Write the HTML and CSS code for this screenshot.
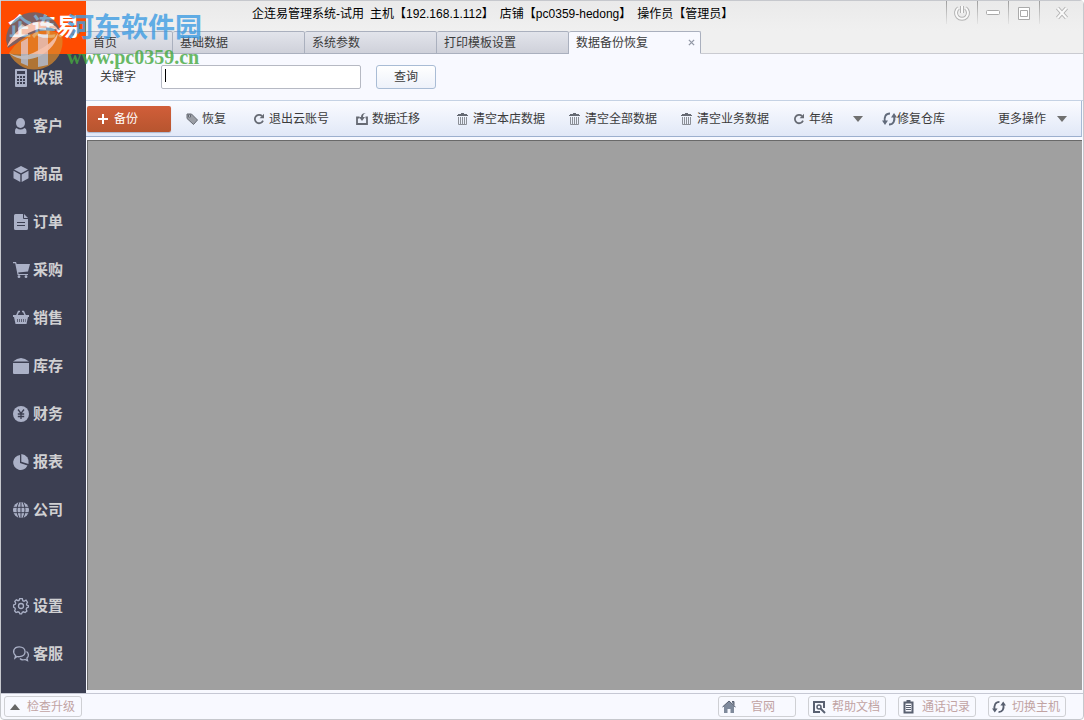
FILE: index.html
```html
<!DOCTYPE html>
<html lang="zh-CN">
<head>
<meta charset="utf-8">
<title>企连易管理系统</title>
<link rel="stylesheet" href="styles.css">
</head>
<body>
<svg class="defs" aria-hidden="true">
  <symbol id="redo" viewBox="0 0 12 12"><path d="M9 3A4.200 4.200 0 1 0 10 7.600" fill="none" stroke="currentColor" stroke-width="1.800"/><path d="M11 .8v4.400H6.600z" fill="currentColor"/></symbol>
  <symbol id="trash" viewBox="0 0 11 13"><path d="M4 1h3v1h3v1h1v1H0V3h1V2h3z" fill="currentColor"/><path d="M1.500 5v7.500h8V5M3.500 5v7M5.500 5v7M7.500 5v7" fill="none" stroke="#8b8f96"/></symbol>
  <symbol id="sync" viewBox="0 0 15 14"><path d="M8 1.500C3.500 1.500 2 5 2.800 10M7 12.500c4.500 0 6-3.500 5.200-8.500" fill="none" stroke="currentColor" stroke-width="2"/><path d="M0 8.500h6L3 13zM15 5.500H9L12 1z" fill="currentColor"/></symbol>
  <symbol id="down" viewBox="0 0 10 6"><path d="M0 0h10L5 6z" fill="currentColor"/></symbol>
</svg>
<div class="window">
  <aside class="sidebar">
    <div class="logo">企连易</div>
    <nav class="menu">
      <a href="#"><svg viewBox="0 0 16 18"><path fill-rule="evenodd" d="M3 0h10q1 0 1 1v16q0 1-1 1H3q-1 0-1-1V1q0-1 1-1zm1 2v3h8V2zM4 7v2h2V7zm3 0v2h2V7zm3 0v2h2V7zM4 10v2h2v-2zm3 0v2h2v-2zm3 0v2h2v-2zm-6 3v2h2v-2zm3 0v2h2v-2zm3 0v2h2v-2z"/></svg>收银</a>
      <a href="#"><svg viewBox="0 0 16 16"><ellipse cx="7.500" cy="5" rx="4.500" ry="5"/><path d="M3.500 10q4 3 8 0 2 .5 2 3v1.500q0 1.500-1.500 1.500H3.500Q2 16 2 14.500V13q0-2.500 1.500-3z"/></svg>客户</a>
      <a href="#"><svg viewBox="0 0 16 16"><path d="M8 0l7 3.500-7 3.800-7-3.800zM.5 4.700l6.800 3.700V16L.5 12.300zM15.500 4.700L8.700 8.400V16l6.800-3.700z"/></svg>商品</a>
      <a href="#"><svg viewBox="0 0 16 16"><path fill-rule="evenodd" d="M2.500 0H10v4q0 1 1 1h4v9.500q0 1.500-1.500 1.500h-11Q1 16 1 14.500v-13Q1 0 2.500 0zM4 8v1h8V8zm0 3v1h8v-1z"/><path d="M11 0l4 4h-4z"/></svg>订单</a>
      <a href="#"><svg viewBox="0 0 16 16"><path d="M0 0h3l.7 2H17l-2 7.500-9.800 1 .4 1.500H15v1H4.600L2.200 1.200H0z"/><circle cx="6" cy="14.700" r="1.400"/><circle cx="13" cy="14.700" r="1.400"/></svg>采购</a>
      <a href="#"><svg viewBox="0 0 16 16"><path d="M3.500 6L5.500 1.500H7M12.500 6l-2-4.500H9" fill="none" stroke="currentColor" stroke-width="1.500"/><path fill-rule="evenodd" d="M0 5h16v2h-1L13.500 14h-11L1 7H0zm4 4v3h.7V9zm2 0v3h.7V9zm2 0v3h.7V9zm2 0v3h.7V9zm2 0v3h.5V9z"/></svg>销售</a>
      <a href="#"><svg viewBox="0 0 16 16"><path d="M0 3.500Q8-3.500 16 3.500zM0 5h16v10q0 1-1 1H1q-1 0-1-1z"/></svg>库存</a>
      <a href="#"><svg viewBox="0 0 16 16"><circle cx="8" cy="8" r="8"/><path d="M5 3.500l3 4 3-4M8 7.500V13M4.800 8h6.400M4.800 10.500h6.400" fill="none" stroke="#3c3f52" stroke-width="1.300"/></svg>财务</a>
      <a href="#"><svg viewBox="0 0 16 16"><path d="M7 1v8l7.500 2.500A7.500 7.500 0 1 1 7 1z"/><path d="M8.300 0A8 8 0 0 1 15.500 10L8.300 7.800z"/></svg>报表</a>
      <a href="#"><svg viewBox="0 0 16 16"><circle cx="8" cy="8" r="8"/><path d="M0 5.300h16M0 10.700h16M8 0v16M6 0q-4 8 0 16M10 0q4 8 0 16" fill="none" stroke="#3c3f52"/></svg>公司</a>
      <a href="#" class="apart"><svg viewBox="0 0 16 16" class="line"><path d="M6.700.7h2.600l.5 2 1.200.6 2-1.100 1.500 2-1 1.800.4 1.200 1.500.5v1.500l-1.700.8-.5 1.300.7 1.800-1.700 1.500-1.800-.8-1.100.5-.7 1.500H6.900l-.7-1.500-1.300-.5-1.800.7-1.500-1.700.8-1.700L1.900 10 .6 9.200V7l1.700-.7.4-1.200-.9-1.800 1.500-1.500 1.800.9 1.100-.5z"/><circle cx="8" cy="8" r="2.500"/></svg>设置</a>
      <a href="#"><svg viewBox="0 0 16 16" class="line"><path d="M2 12l.6-2.300C-1.200 6 .8.800 6.200.8c7.500 0 8 9.400.3 9.900q-1.500.2-2.500-.2zM13.500 5.500c2.500 1.800 2.500 5 .4 6.600l.6 2.600-2.500-1.200c-2 .7-4 .3-5-1"/></svg>客服</a>
    </nav>
  </aside>
  <main class="content">
    <header class="titlebar">
      <h1 class="caption"><span>企连易管理系统-试用</span><span>主机【192.168.1.112】</span><span>店铺【pc0359-hedong】</span><span>操作员【管理员】</span></h1>
      <div class="controls">
        <button aria-label="电源"><svg viewBox="0 0 18 18"><path d="M5.500 4a6 6 0 1 0 7 0M9 2v7" class="edge"/><path d="M5.500 4a6 6 0 1 0 7 0M9 2v7" class="core"/></svg></button>
        <button aria-label="最小化"><svg viewBox="0 0 18 18"><rect x="2.500" y="6.500" width="13" height="4" rx="1" fill="#fff" stroke="#aaa"/></svg></button>
        <button aria-label="最大化"><svg viewBox="0 0 18 18"><path d="M3.500 3.500h11v12h-11zM5.500 6.500h7v6h-7z" fill="#fff" stroke="#aaa"/></svg></button>
        <button aria-label="关闭"><svg viewBox="0 0 18 18"><path d="M4.500 4l9 10M13.500 4l-9 10" class="edge"/><path d="M4.500 4l9 10M13.500 4l-9 10" class="core"/></svg></button>
      </div>
    </header>
    <nav class="tabs">
      <button class="tab home">首页</button>
      <button class="tab">基础数据</button>
      <button class="tab">系统参数</button>
      <button class="tab">打印模板设置</button>
      <button class="tab active">数据备份恢复<svg viewBox="0 0 8 8"><path d="M1 1l6 6M7 1L1 7" fill="none" stroke="currentColor" stroke-width="1.500"/></svg></button>
    </nav>
    <form class="search">
      <label for="keyword">关键字</label>
      <div class="field"><input id="keyword" type="text"><i class="caret"></i></div>
      <button type="button">查询</button>
    </form>
    <div class="toolbar">
      <button class="primary"><svg viewBox="0 0 10 10"><path d="M5 0v10M0 5h10" stroke="currentColor" stroke-width="2"/></svg>备份</button>
      <button class="restore"><svg viewBox="0 0 12 12"><path fill-rule="evenodd" d="M1 1h4.500l6 6-4 4.500L1 5.500zm1.500 1v2h2V2z" fill="#9b9ea5" stroke="currentColor"/></svg>恢复</button>
      <button class="logout"><svg viewBox="0 0 12 12"><use href="#redo"/></svg>退出云账号</button>
      <button class="migrate"><svg viewBox="0 0 12 12"><path d="M3.500 4.500H1V11h10V4.500H9.500" fill="none" stroke="currentColor" stroke-width="1.800"/><path d="M10 0Q7 .5 7 4h2L6 8 3 4h2Q5 0 10 0z" fill="currentColor"/></svg>数据迁移</button>
      <button class="wipe first"><svg viewBox="0 0 11 13"><use href="#trash"/></svg>清空本店数据</button>
      <button class="wipe"><svg viewBox="0 0 11 13"><use href="#trash"/></svg>清空全部数据</button>
      <button class="wipe"><svg viewBox="0 0 11 13"><use href="#trash"/></svg>清空业务数据</button>
      <button class="year"><svg viewBox="0 0 12 12"><use href="#redo"/></svg>年结</button>
      <button class="drop" aria-label="年结选项"><svg viewBox="0 0 10 6"><use href="#down"/></svg></button>
      <button class="repair"><svg viewBox="0 0 15 14"><use href="#sync"/></svg>修复仓库</button>
      <button class="more">更多操作<svg viewBox="0 0 10 6"><use href="#down"/></svg></button>
    </div>
    <section class="canvas"></section>
  </main>
  <footer class="status">
    <button class="upgrade"><svg viewBox="0 0 10 6"><path d="M0 6h10L5 0z" fill="currentColor"/></svg><span>检查升级</span></button>
    <button><svg viewBox="0 0 14 14"><path d="M7 1l6.500 6H12v6H8.500V9h-3v4H2V7H.5zM10 1.500h2V5l-2-2z" fill="#7f8a9c"/><path d="M.5 7L7 1l6.500 6M10 1.500h2V5" fill="none" stroke="currentColor"/></svg><span>官网</span></button>
    <button><svg viewBox="0 0 14 14"><path d="M12 8V2H2v10h6" fill="none" stroke="currentColor" stroke-width="2"/><circle cx="7" cy="7" r="2" fill="none" stroke="currentColor" stroke-width="1.500"/><path d="M8.500 8.500l4.500 4.500" stroke="currentColor" stroke-width="2"/></svg><span>帮助文档</span></button>
    <button><svg viewBox="0 0 14 14"><path d="M2.500 2.500h8v10h-8z" fill="none" stroke="currentColor" stroke-width="2"/><path d="M4.500 0h4v3h-4z" fill="currentColor"/><path d="M4 5.500h5M4 7.500h5M4 9.500h5" stroke="currentColor"/></svg><span>通话记录</span></button>
    <button><svg viewBox="0 0 15 14"><use href="#sync"/></svg><span>切换主机</span></button>
  </footer>
  <div class="watermark">
    <svg viewBox="0 0 58 58">
      <path d="M1 30A28 28 0 0 1 55 20L29 24 3 38z" fill="#2f6c9e" opacity=".85"/>
      <path d="M57 26A28 28 0 0 1 4 43Q14 28 29 23 45 17 57 26z" fill="#dc8a2c"/>
      <path d="M16 32l7-4v28l-7-3zM33 24h10v31l-10 2z" fill="#dcdcdf"/>
      <path d="M13 27v-9l4-4 6 4v7zM32 19v-6h9v7z" fill="#cfe0ee" opacity=".8"/>
      <path d="M2 37Q8 20 27 13 46 7 54 21 43 14 28 21 12 27 2 37z" fill="#f2f0f0"/>
      <path d="M4 43Q16 50 32 41 48 33 53 23 51 37 35 46 17 54 4 43z" fill="#f2f0f0" opacity=".9"/>
    </svg>
    <div class="words"><strong>河东软件园</strong><b>www.pc0359.cn</b></div>
  </div>
</div>
</body>
</html>
```

FILE: styles.css
```css
* { box-sizing: border-box; }
body {
  margin: 0;
  font: 12px/16px "Liberation Sans", "Noto Sans CJK SC", sans-serif;
  color: #3b3b3b;
}
button {
  display: flex;
  align-items: center;
  padding: 0;
  border: 0;
  background: none;
  font: inherit;
  color: inherit;
  white-space: nowrap;
}
svg { flex: none; display: block; overflow: visible; }
.defs { position: absolute; width: 0; height: 0; }
.window {
  position: relative;
  display: grid;
  grid-template: 1fr 26px / 85px 1fr;
  min-height: 100vh;
  border: 1px solid #c6c8cd;
  border-radius: 0 4px 4px 4px;
  background: #f8f9ff;
}

.sidebar { background: #3c3f52; }
.logo {
  height: 53px;
  padding: 8px 0 0 7px;
  background: #ff4b00;
  color: #fff;
  font-size: 24px;
  font-weight: 700;
  line-height: 36px;
}
.menu a {
  display: flex;
  align-items: center;
  gap: 4px;
  height: 48px;
  padding-left: 12px;
  color: #d0d0d2;
  font-size: 15px;
  font-weight: 700;
  line-height: 20px;
  text-decoration: none;
}
.menu svg { width: 16px; height: 16px; fill: #abb1c7; color: #abb1c7; }
.menu a:first-child svg { height: 18px; }
.menu svg.line { fill: none; stroke: #abb1c7; stroke-width: 1.3; }
.menu a.apart { margin-top: 48px; }

.content { display: flex; flex-direction: column; min-width: 0; }
.titlebar {
  display: flex;
  justify-content: space-between;
  height: 30px;
  padding-left: 166px;
  background: linear-gradient(#eaeaea, #f0f0f0);
}
.caption {
  display: flex;
  gap: 6px;
  margin: 0;
  padding-top: 5px;
  color: #000;
  font-size: 12px;
  font-weight: 400;
  white-space: nowrap;
}
.controls { display: flex; }
.controls button {
  justify-content: center;
  width: 31px;
  height: 23px;
  border-left: 1px solid;
  border-image: linear-gradient(#999, #e8e8e8) 1;
}
.controls button:last-child { width: 44px; }
.controls svg { width: 18px; height: 18px; }
.edge { fill: none; stroke: #b4b4b4; stroke-width: 4; }
.core { fill: none; stroke: #fafafa; stroke-width: 2; }

.tabs {
  display: flex;
  height: 23px;
  background: #f0f0f0;
  border-bottom: 1px solid #cacbd1;
}
.tab {
  justify-content: space-between;
  width: 132px;
  height: 23px;
  padding: 0 5px 0 7px;
  border: 1px solid #aab0be;
  border-left-width: 0;
  border-radius: 2px 2px 0 0;
  background: linear-gradient(#e2e4eb, #cfd1da);
}
.tab.home { width: 87px; }
.tab.active { background: #f8f9ff; border-bottom-color: #f8f9ff; }
.tab svg { width: 7px; height: 7px; color: #9197a5; }

.search {
  display: flex;
  align-items: center;
  height: 47px;
  padding-left: 14px;
  border-bottom: 1px solid #c5d2e4;
}
.search label { width: 61px; }
.field { position: relative; width: 200px; margin-right: 15px; }
.field input {
  display: block;
  width: 100%;
  height: 24px;
  padding: 0 4px;
  border: 1px solid #b6b9c3;
  border-radius: 2px;
  background: #fff;
  font: inherit;
}
.caret { position: absolute; left: 4px; top: 4px; width: 1px; height: 13px; background: #000; }
.search button {
  justify-content: center;
  width: 60px;
  height: 24px;
  border: 1px solid #a9bcd5;
  border-radius: 3px;
  background: linear-gradient(#fff, #edf1fa);
}

.toolbar {
  display: flex;
  align-items: center;
  height: 36px;
  padding-left: 1px;
  border-right: 1px solid #a7b9d5;
  border-bottom: 1px solid #9cafce;
  background: linear-gradient(#fafbff, #e1e8f7);
  margin-right: 1px;
}
.toolbar button { gap: 4px; }
.toolbar svg { width: 12px; height: 12px; color: #666a73; }
.toolbar .primary {
  width: 84px;
  height: 26px;
  padding-left: 11px;
  gap: 6px;
  border-radius: 2px;
  background: linear-gradient(#d15e39, #b7552f);
  box-shadow: 0 1px 1px #aab7d0;
  color: #fff;
}
.toolbar .primary svg { width: 10px; height: 10px; color: #fff; }
.restore { margin-left: 15px; }
.logout { margin-left: 27px; }
.migrate { margin-left: 27px; }
.wipe { margin-left: 24px; }
.wipe.first { margin-left: 37px; }
.toolbar .wipe { gap: 5px; }
.toolbar .wipe svg { width: 11px; height: 13px; }
.year { margin-left: 24px; }
.toolbar .drop svg, .toolbar .more svg { width: 10px; height: 6px; color: #707070; }
.drop { margin-left: 20px; }
.repair { margin-left: 19px; }
.toolbar .repair { gap: 0; }
.toolbar .repair svg { width: 15px; height: 14px; color: #626b7b; }
.toolbar .more { gap: 11px; margin-left: auto; margin-right: 14px; }

.canvas {
  flex: 1;
  margin: 3px 1px 3px 1px;
  border: solid #696969;
  border-width: 1px 0 0 1px;
  background: #a0a0a0;
}

.status {
  grid-column: 1 / -1;
  display: flex;
  align-items: center;
  gap: 12px;
  padding: 0 17px 0 3px;
  border-top: 1px solid #c6c8d4;
}
.status button {
  width: 78px;
  height: 21px;
  padding: 0 5px 0 3px;
  border: 1px solid #cfd0d4;
  border-radius: 3px;
  color: #c1a3a3;
}
.status span { flex: 1; text-align: right; }
.status button:nth-child(2) span { text-align: center; }
.status svg { width: 14px; height: 14px; color: #596071; }
.status .upgrade { margin-right: auto; padding: 0 6px 0 5px; }
.status .upgrade svg { width: 10px; height: 6px; color: #666; }

.watermark {
  position: absolute;
  left: 4px;
  top: 9px;
  display: flex;
  gap: 4px;
  opacity: .8;
  pointer-events: none;
}
.watermark svg { width: 58px; height: 58px; opacity: .9; }
.words { display: flex; flex-direction: column; white-space: nowrap; }
.words strong { color: #3e9de3; font-size: 27px; line-height: 37px; }
.words b { color: #45a93f; font: 700 20px/20px "Liberation Serif", serif; }
```
